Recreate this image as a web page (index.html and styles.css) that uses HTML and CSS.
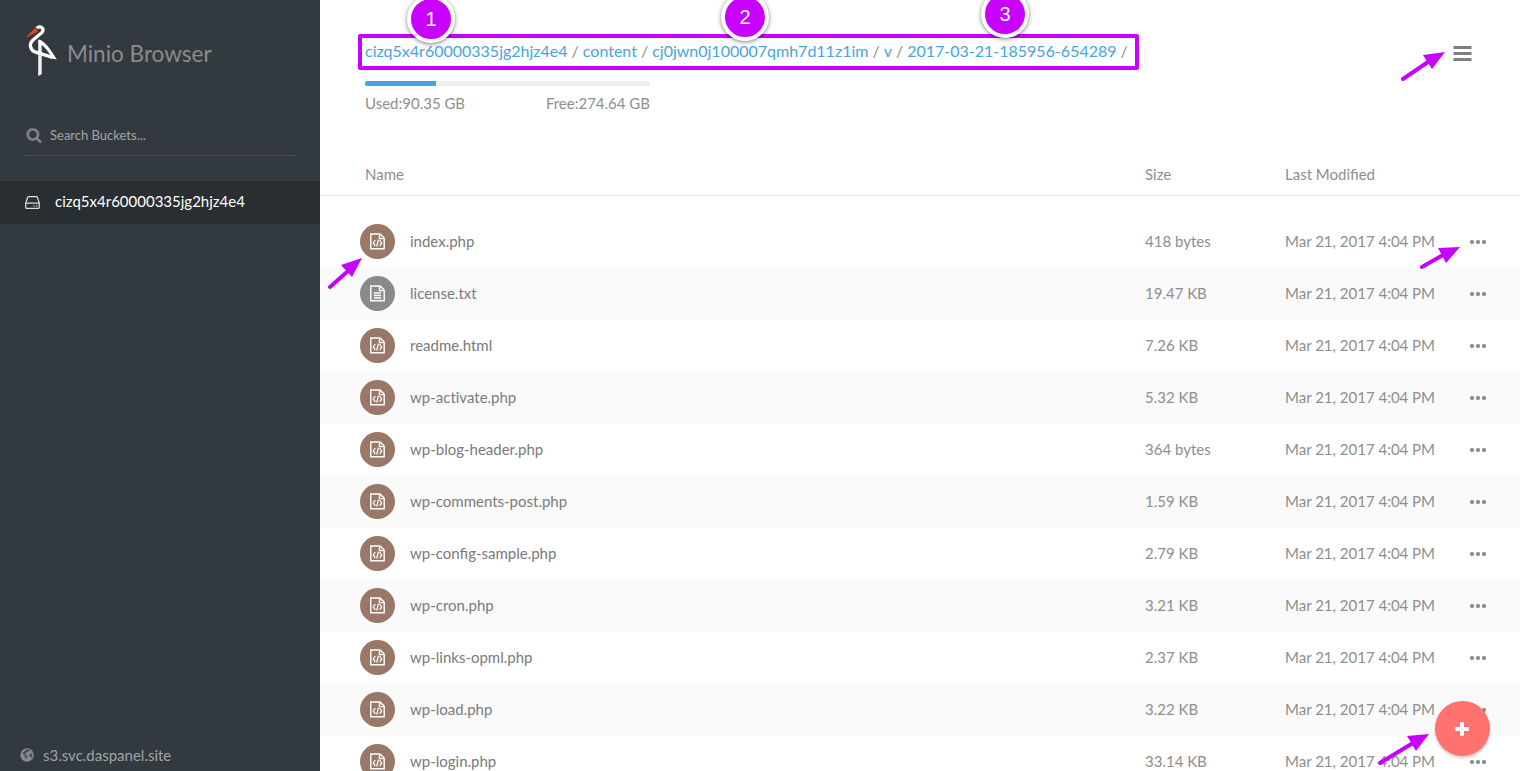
FILE: index.html
```html
<!DOCTYPE html>
<html lang="en">
<head>
<meta charset="utf-8">
<title>Minio Browser</title>
<link rel="stylesheet" href="styles.css">
</head>
<body>
<svg class="defs" width="0" height="0">
  <symbol id="code" viewBox="0 0 15 17"><path d="M.8 1H10l4.2 4.1V15.8H.8ZM9.5 1V5.6H14" fill="none" stroke="#fff" stroke-width="1.4"/><path d="M5.3 7 3.3 9.9l2 2.9M9.7 7l2 2.9-2 2.9M8.4 6.6 6.7 13.6" fill="none" stroke="#fff" stroke-width="1.3"/></symbol>
  <symbol id="text" viewBox="0 0 15 17"><path d="M.8 1H10l4.2 4.1V15.8H.8ZM9.5 1V5.6H14" fill="none" stroke="#fff" stroke-width="1.4"/><path d="M3.8 8h7.4M3.8 10.5h7.4M3.8 13h7.4" stroke="#fff" stroke-width="1.3"/></symbol>
</svg>
<div class="app">
  <aside class="sidebar">
    <div class="brand">
      <svg class="logo" viewBox="0 0 32 52" width="32" height="52"><path d="M.2 13 10.6 2.4 12.8 6.4Z" fill="#f0401c"/><path d="M13.2 15.4h3.5V49.2l-3.5 1.9Z" fill="#f1f1f1"/><path d="M13.2 28.6l3.5 1.2v1.8l-3.5-1Z" fill="#c8c8c8"/><path d="M11.8 3.3C14.5-.3 20 3.1 17 7.5L8 14.9C3.6 18.7 5.2 25 10 26.9L27.5 32.3" fill="none" stroke="#fff" stroke-width="3.3"/><path d="M13.2 14.3C20 16.8 23.5 20.8 31.8 34.6L25.5 33.3 26 31C21.5 24 18.5 20.5 14 18.5Z" fill="#fff"/></svg>
      <h2>Minio Browser</h2>
    </div>
    <div class="search"><svg viewBox="0 0 1792 1792" width="16" height="16"><path fill="#818486" stroke="#818486" stroke-width="50" d="M1216 832q0-185-131.5-316.5t-316.5-131.5-316.5 131.5-131.5 316.5 131.5 316.5 316.5 131.5 316.5-131.5 131.5-316.5zm512 832q0 52-38 90t-90 38q-54 0-90-38l-343-342q-179 124-399 124-143 0-273.5-55.5t-225-150-150-225-55.5-273.5 55.5-273.5 150-225 225-150 273.5-55.5 273.5 55.5 225 150 150 225 55.5 273.5q0 220-124 399l343 343q37 37 37 90z"/></svg><span>Search Buckets...</span></div>
    <div class="bucket"><svg viewBox="0 0 15 13" width="15" height="13"><path d="M.7 7.1 2.7 1.3Q2.9.7 3.5.7h8Q12.1.7 12.3 1.3l2 5.8v4.4q0 .8-.8.8H1.5q-.8 0-.8-.8ZM.7 7.1h13.6" fill="none" stroke="#dfe0e0" stroke-width="1.2"/><path d="M8.4 9h1.5v1.5H8.4ZM11 9h1.5v1.5H11Z" fill="#a5a7a8"/></svg><span>cizq5x4r60000335jg2hjz4e4</span></div>
    <div class="host"><svg viewBox="0 0 14 14" width="14" height="14"><circle cx="7" cy="7" r="6.7" fill="#888b8e"/><path d="M6 2 8.2 1.3l1.6.9-.9 1.3-1.7.5-1.3 1.3-1.2.6 1.1 1 1.5.5.4 1-1 1.4-.3 1.2-1.2-1.6-.9-2.2L2.8 6 3 4.4ZM9.5 6.3l1.7-1 1.1 1.1-.3 2.2-1.3 1.5-.6-1.9L9.2 7.5Z" fill="#454d53"/></svg><span>s3.svc.daspanel.site</span></div>
  </aside>
  <main class="main">
    <header class="top">
      <nav class="crumbs"><a>cizq5x4r60000335jg2hjz4e4</a><i>/</i><a>content</a><i>/</i><a>cj0jwn0j100007qmh7d11z1im</a><i>/</i><a>v</a><i>/</i><a>2017-03-21-185956-654289</a><i>/</i></nav>
      <svg class="menu" viewBox="0 0 19 15" width="19" height="15"><path d="M.5 1.5h18M.5 7.5h18M.5 13.5h18" stroke="#7f7f7f" stroke-width="3"/></svg>
    </header>
    <div class="usage">
      <div class="bar"><div class="fill"></div></div>
      <div class="stats"><span>Used:90.35 GB</span><span>Free:274.64 GB</span></div>
    </div>
    <div class="row head"><span>Name</span><span>Size</span><span>Last Modified</span></div>
    <div class="list">
      <div class="row"><b class="type"><svg><use href="#code"/></svg></b><span class="name">index.php</span><span>418 bytes</span><span>Mar 21, 2017 4:04 PM</span><span class="dots"></span></div>
      <div class="row"><b class="type txt"><svg><use href="#text"/></svg></b><span class="name">license.txt</span><span>19.47 KB</span><span>Mar 21, 2017 4:04 PM</span><span class="dots"></span></div>
      <div class="row"><b class="type"><svg><use href="#code"/></svg></b><span class="name">readme.html</span><span>7.26 KB</span><span>Mar 21, 2017 4:04 PM</span><span class="dots"></span></div>
      <div class="row"><b class="type"><svg><use href="#code"/></svg></b><span class="name plain">wp-activate.php</span><span>5.32 KB</span><span>Mar 21, 2017 4:04 PM</span><span class="dots"></span></div>
      <div class="row"><b class="type"><svg><use href="#code"/></svg></b><span class="name">wp-blog-header.php</span><span>364 bytes</span><span>Mar 21, 2017 4:04 PM</span><span class="dots"></span></div>
      <div class="row"><b class="type"><svg><use href="#code"/></svg></b><span class="name">wp-comments-post.php</span><span>1.59 KB</span><span>Mar 21, 2017 4:04 PM</span><span class="dots"></span></div>
      <div class="row"><b class="type"><svg><use href="#code"/></svg></b><span class="name">wp-config-sample.php</span><span>2.79 KB</span><span>Mar 21, 2017 4:04 PM</span><span class="dots"></span></div>
      <div class="row"><b class="type"><svg><use href="#code"/></svg></b><span class="name">wp-cron.php</span><span>3.21 KB</span><span>Mar 21, 2017 4:04 PM</span><span class="dots"></span></div>
      <div class="row"><b class="type"><svg><use href="#code"/></svg></b><span class="name">wp-links-opml.php</span><span>2.37 KB</span><span>Mar 21, 2017 4:04 PM</span><span class="dots"></span></div>
      <div class="row"><b class="type"><svg><use href="#code"/></svg></b><span class="name">wp-load.php</span><span>3.22 KB</span><span>Mar 21, 2017 4:04 PM</span><span class="dots"></span></div>
      <div class="row"><b class="type"><svg><use href="#code"/></svg></b><span class="name">wp-login.php</span><span>33.14 KB</span><span>Mar 21, 2017 4:04 PM</span><span class="dots"></span></div>
    </div>
  </main>
</div>
<div class="add"><svg viewBox="0 0 14 14" width="14" height="14"><path d="M5.6.3h2.8q.6 0 .6.6V5h4.1q.6 0 .6.6v2.8q0 .6-.6.6H9v4.1q0 .6-.6.6H5.6q-.6 0-.6-.6V9H.9q-.6 0-.6-.6V5.6Q.3 5 .9 5H5V.9q0-.6.6-.6Z" fill="#fff"/></svg></div>
<div class="frame"></div>
<svg class="arrows" viewBox="0 0 1520 771" width="1520" height="771">
  <g stroke="#c800ff" stroke-width="4" stroke-linecap="round"><path d="M330 287 348 271M1403 79 1428 62M1422 267 1443 255M1380 763 1413 743"/></g>
  <path fill="#c800ff" d="M362 258 341 265 352 277ZM1445 52 1423 55 1432 69ZM1460 247 1438 248 1446 263ZM1429 734 1407 736 1416 751Z"/>
</svg>
<div class="badge one">1</div>
<div class="badge two">2</div>
<div class="badge three">3</div>
</body>
</html>
```

FILE: styles.css
```css
* { box-sizing: border-box; }
body { margin: 0; overflow: hidden; font: 15px/20px Lato, sans-serif; color: #8e8e8e; background: #fff; }
svg { display: block; flex: none; }
.defs { position: absolute; }
.app { display: flex; height: 771px; overflow: hidden; }

.sidebar { width: 320px; flex: none; display: flex; flex-direction: column; background: #32393f; }
.brand { display: flex; align-items: flex-start; padding: 25px 0 0 25px; height: 115px; gap: 10px; }
.brand h2 { margin: 14px 0 0; font-size: 22.5px; line-height: 30px; font-weight: 400; color: #8c8c8c; }
.search { display: flex; align-items: center; gap: 8px; height: 41px; margin: 0 25px; padding-left: 1px; border-bottom: 1px solid #464c52; font-size: 13px; color: #a4a7a9; }
.bucket { display: flex; align-items: center; gap: 15px; height: 43px; margin-top: 25px; padding: 0 0 3px 25px; background: #282e32; color: #fff; }
.bucket svg { margin-top: 3px; }
.host { display: flex; align-items: center; gap: 9px; margin-top: auto; padding: 0 0 6px 20px; color: #a0a3a5; }

.main { flex: 1; min-width: 0; }
.top { display: flex; justify-content: space-between; padding: 41px 48px 0 45px; }
.crumbs { display: flex; font-size: 16px; color: #8e8e8e; }
.crumbs a { color: #46a5e0; }
.crumbs i { font-style: normal; margin: 0 4px; }
.menu { margin-top: 5px; }
.usage { width: 285px; margin: 20px 0 0 45px; }
.bar { height: 5px; border-radius: 2px; overflow: hidden; background: #eee; }
.fill { width: 25%; height: 100%; background: #46a5e0; }
.stats { display: flex; justify-content: space-between; padding-top: 7px; }

.row { display: grid; grid-template-columns: 50px 735px 140px 185px 20px; align-items: center; height: 52px; padding: 0 0 2px 40px; }
.row:nth-child(even) { background: #fafafa; }
.row.head { grid-template-columns: 780px 140px 1fr; height: 42px; margin-top: 41px; padding: 0 0 2px 45px; border-bottom: 1px solid #eee; background: none; }
.list { padding-top: 20px; }
.name { color: #7a7a7a; }
.plain { font-variant-ligatures: none; }
.type { display: flex; align-items: center; justify-content: center; width: 35px; height: 35px; margin-top: 1px; border-radius: 50%; background: #997867; }
.type svg { width: 15px; height: 17px; }
.type.txt { background: #8a8a8a; }
.dots { width: 18px; height: 4px; margin-top: 2px; background: radial-gradient(circle at 2px 2px, #8e8e8e 1.7px, transparent 2.4px) 0 0 / 6px 4px; }

.add { position: absolute; left: 1435px; top: 701px; width: 55px; height: 55px; display: flex; align-items: center; justify-content: center; padding-right: 1px; border-radius: 50%; background: #ff726f; box-shadow: 0 2px 3px rgba(0,0,0,.2); }
.frame { position: absolute; left: 358px; top: 34px; width: 781px; height: 36px; border: 4px solid #c800ff; border-radius: 2px; }
.arrows { position: absolute; left: 0; top: 0; }
.badge { position: absolute; width: 48px; height: 48px; border: 4px solid #fff; border-radius: 50%; background: #c800ff; box-shadow: 0 1px 4px rgba(0,0,0,.5); color: #fff; font: 20px/40px "Liberation Sans", sans-serif; text-align: center; }
.one { left: 407px; top: -5px; }
.two { left: 721px; top: -7px; }
.three { left: 981px; top: -10px; }
```
